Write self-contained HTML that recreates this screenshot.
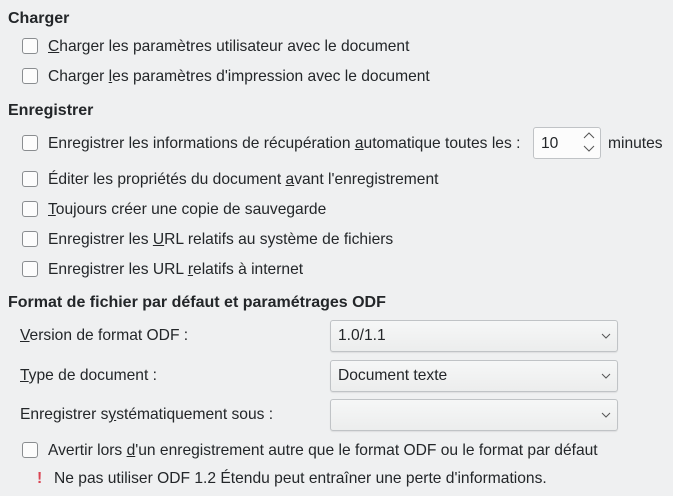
<!DOCTYPE html>
<html><head><meta charset="utf-8"><style>
body{margin:0;width:673px;height:496px;background:#eff0f1;font-family:"Liberation Sans","DejaVu Sans",sans-serif;font-size:15.6px;color:#232629;position:relative;overflow:hidden}
.a{position:absolute;white-space:nowrap;line-height:18px}
.h{font-weight:bold;font-size:16px}
.cb{position:absolute;width:14px;height:14px;border:1px solid #8a8d90;border-radius:3px;background:#fcfcfc}
.sel{position:absolute;left:330px;width:286px;height:30px;border:1px solid #c0c3c6;border-radius:3px;background:linear-gradient(#f6f7f7,#eceded);box-shadow:0 1px 1px rgba(0,0,0,.08)}
.sel span{position:absolute;left:7px;top:6px}
.sel svg{position:absolute;right:6px;top:12px}
u{text-decoration:underline}
</style></head><body>
<div class="a h" style="left:8px;top:10px">Charger</div>
<div class="cb" style="left:22px;top:38px"></div><div class="a" style="left:48px;top:38px"><u>C</u>harger les paramètres utilisateur avec le document</div>
<div class="cb" style="left:22px;top:68px"></div><div class="a" style="left:48px;top:68px">Charger <u>l</u>es paramètres d'impression avec le document</div>
<div class="a h" style="left:8px;top:102px">Enregistrer</div>
<div class="cb" style="left:22px;top:135px"></div><div class="a" style="left:48px;top:135px">Enregistrer les informations de récupération <u>a</u>utomatique toutes les :</div>
<div style="position:absolute;left:533px;top:127px;width:66px;height:30px;border:1px solid #c0c3c6;border-radius:3px;background:#fcfcfc"></div>
<div class="a" style="left:541px;top:135px">10</div>
<svg style="position:absolute;left:583px;top:132px" width="12" height="20"><path d="M1 6l5-5 5 5M1 14l5 5 5-5" fill="none" stroke="#555" stroke-width="1"/></svg>
<div class="a" style="left:608px;top:135px">minutes</div>
<div class="cb" style="left:22px;top:171px"></div><div class="a" style="left:48px;top:171px">Éditer les propriétés du document <u>a</u>vant l'enregistrement</div>
<div class="cb" style="left:22px;top:201px"></div><div class="a" style="left:48px;top:201px"><u>T</u>oujours créer une copie de sauvegarde</div>
<div class="cb" style="left:22px;top:231px"></div><div class="a" style="left:48px;top:231px">Enregistrer les <u>U</u>RL relatifs au système de fichiers</div>
<div class="cb" style="left:22px;top:261px"></div><div class="a" style="left:48px;top:261px">Enregistrer les URL <u>r</u>elatifs à internet</div>
<div class="a h" style="left:8px;top:294px">Format de fichier par défaut et paramétrages ODF</div>
<div class="a" style="left:20px;top:327px"><u>V</u>ersion de format ODF :</div>
<div class="sel" style="top:320px"><span>1.0/1.1</span><svg width="10" height="6"><path d="M1 1l4 4 4-4" fill="none" stroke="#555"/></svg></div>
<div class="a" style="left:20px;top:367px"><u>T</u>ype de document :</div>
<div class="sel" style="top:360px"><span>Document texte</span><svg width="10" height="6"><path d="M1 1l4 4 4-4" fill="none" stroke="#555"/></svg></div>
<div class="a" style="left:20px;top:406px">Enregistrer s<u>y</u>stématiquement sous :</div>
<div class="sel" style="top:399px"><svg width="10" height="6"><path d="M1 1l4 4 4-4" fill="none" stroke="#555"/></svg></div>
<div class="cb" style="left:22px;top:442px"></div><div class="a" style="left:48px;top:442px">Avertir lors <u>d</u>'un enregistrement autre que le format ODF ou le format par défaut</div>
<div class="a" style="left:37px;top:470px;color:#da4453;font-weight:bold">!</div>
<div class="a" style="left:54px;top:470px">Ne pas utiliser ODF 1.2 Étendu peut entraîner une perte d'informations.</div>
</body></html>
